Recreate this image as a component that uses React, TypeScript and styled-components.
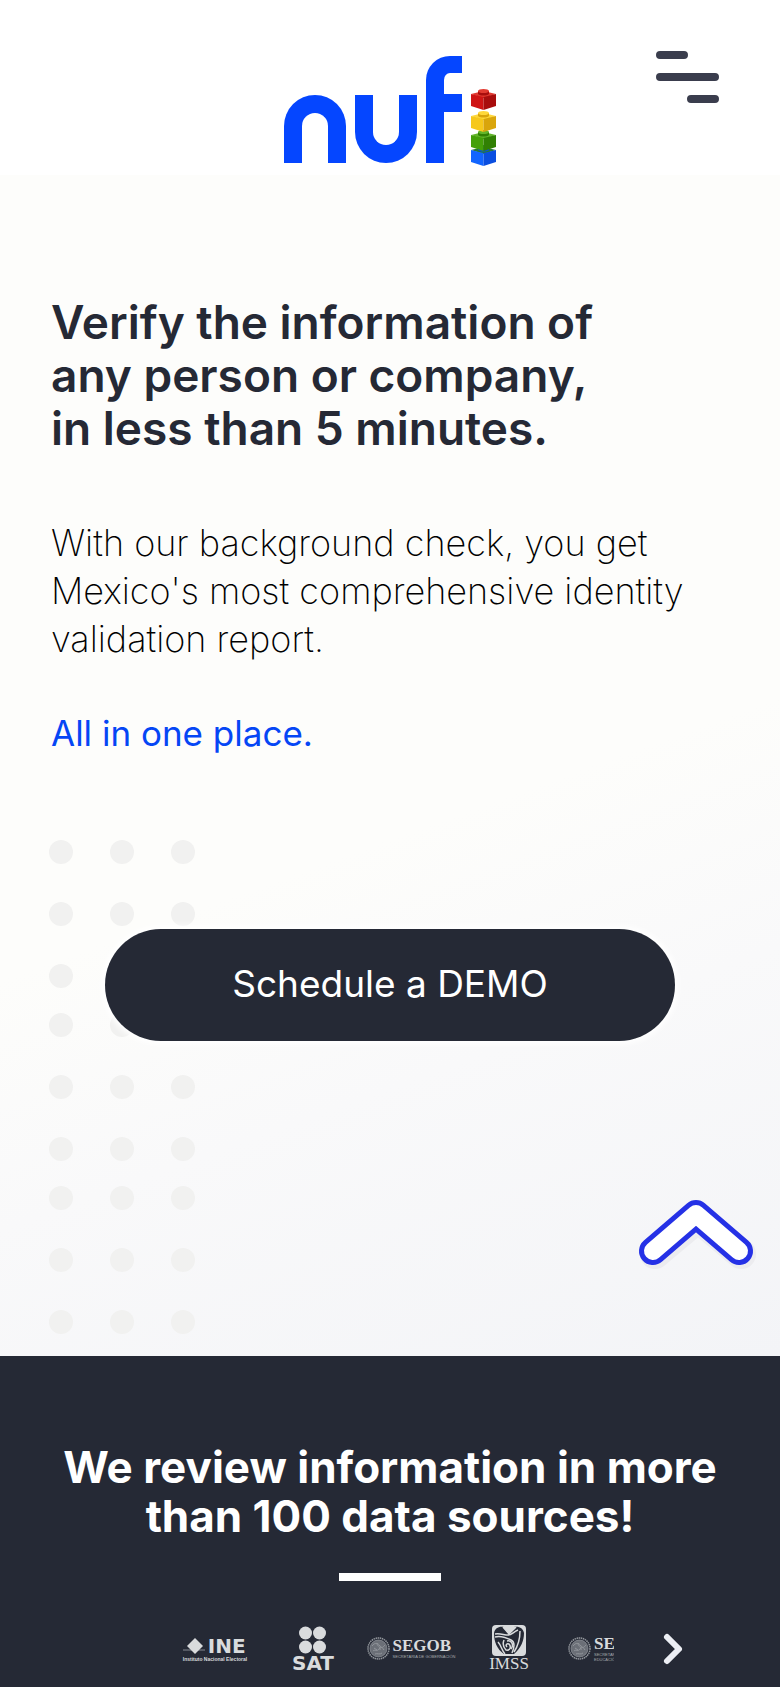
import React from "react"
import styled, { createGlobalStyle } from "styled-components"

const GlobalStyle = createGlobalStyle`
  * {
    box-sizing: border-box;
  }
  body {
    margin: 0;
    background-color: #252935;
    font-family: Inter, "Open Sans", sans-serif;
  }
  h1, h2, p {
    margin: 0;
  }
  button {
    padding: 0;
    border: none;
    background: none;
    cursor: pointer;
  }
`
const Header = styled.header`
  display: grid;
  grid-template-columns: 1fr auto 1fr;
  align-items: start;
  height: 175px;
  padding: 51px 61px 0;
  background-color: #ffffff;
`
const Logo = styled.a`
  grid-column: 2;
  display: flex;
  align-items: flex-end;
  gap: 9px;
  height: 115px;
`
const LetterN = styled.span`
  width: 62px;
  height: 68px;
  margin-bottom: 3px;
  border: 18px solid #0546ff;
  border-bottom: none;
  border-radius: 31px 31px 0 0;
`
const LetterU = styled(LetterN)`
  border-bottom: 18px solid #0546ff;
  border-top: none;
  border-radius: 0 0 31px 31px;
`
const LetterF = styled.span`
  width: 36px;
  height: 107px;
  margin-bottom: 3px;
  padding-top: 21px;
  border-left: 18px solid #0546ff;
  border-top: 17px solid #0546ff;
  border-top-left-radius: 24px;
  &::after {
    content: "";
    display: block;
    height: 18px;
    background-color: #0546ff;
  }
`
const MenuButton = styled.button`
  justify-self: end;
  height: 52px;
`
const Hero = styled.main`
  position: relative;
  padding: 121px 51px 315px;
  background: linear-gradient(160deg, #fdfdfb 0%, #fdfdfb 55%, #f9f9fa 72%, #f3f4f7 100%);
`
const Title = styled.h1`
  font-size: 46px;
  line-height: 53px;
  font-weight: 600;
  color: #252935;
`
const Lead = styled.p`
  margin-top: 64px;
  font-size: 36px;
  line-height: 48px;
  font-weight: 200;
  color: #000000;
`
const Highlight = styled.p`
  margin-top: 46px;
  font-size: 35px;
  line-height: 48px;
  font-weight: 400;
  color: #0546f5;
`
const DemoButton = styled.button`
  && {
    position: relative;
    display: block;
    width: 100%;
    max-width: 570px;
    height: 112px;
    margin: 172px auto 0;
    border-radius: 56px;
    background-color: #252935;
    box-shadow: 0 0 6px 3px #ffffff;
    color: #ffffff;
    font-family: inherit;
    font-size: 37px;
    font-weight: 400;
    padding-bottom: 4px;
  }
`
const Dots = styled.svg`
  position: absolute;
  left: 48px;
  bottom: 22px;
`
const TopButton = styled.button`
  position: absolute;
  right: 21px;
  bottom: 84px;
  height: 78px;
`
const Sources = styled.section`
  padding: 87px 51px 14px;
  background-color: #252935;
  color: #ffffff;
`
const SourcesTitle = styled.h2`
  font-size: 44px;
  line-height: 49px;
  font-weight: 700;
  text-align: center;
`
const Divider = styled.div`
  width: 102px;
  height: 8px;
  margin: 32px auto 44px;
  background-color: #ffffff;
`
const Carousel = styled.div`
  display: grid;
  grid-template-columns: 1fr minmax(0, 448px) 1fr;
  align-items: center;
`
const Strip = styled.div`
  grid-column: 2;
  display: flex;
  overflow: hidden;
  color: #d9dbdd;
`
const Slide = styled.div<{ $start?: boolean }>`
  flex: 0 0 98px;
  display: flex;
  align-items: center;
  justify-content: ${props => (props.$start ? "flex-start" : "center")};
  height: 47px;
  padding-left: ${props => (props.$start ? "10px" : "0")};
`
const Stack = styled.div<{ $center?: boolean }>`
  display: flex;
  flex-direction: column;
  align-items: ${props => (props.$center ? "center" : "flex-start")};
  white-space: nowrap;
`
const Line = styled.div`
  display: flex;
  align-items: center;
  gap: 3px;
`
const Ine = styled.span`
  font: 700 20px/20px "DejaVu Sans", sans-serif;
`
const Sat = styled.span`
  font: 700 20px/18px "DejaVu Sans", sans-serif;
`
const Imss = styled.span`
  font: 400 17px/16px "Liberation Serif", serif;
`
const Ministry = styled.span`
  font: 700 17px/16px "Liberation Serif", serif;
`
const Caption = styled.span`
  font: 700 5px/6px "Liberation Sans", sans-serif;
`
const MinistryCaption = styled.span`
  font: 400 4px/5px "Liberation Sans", sans-serif;
  color: #a6a9ae;
`
const NextButton = styled.button`
  justify-self: start;
  height: 34px;
  margin-left: 48px;
`

const bricks = [
  { y: 0, top: "#e23a30", left: "#cf1414", right: "#a80d0d" },
  { y: 22, top: "#ffd83a", left: "#f6c81c", right: "#d9a50c" },
  { y: 41, top: "#63b52a", left: "#45a009", right: "#318003" },
  { y: 56, top: "#287a35", left: "#1265ff", right: "#0a4ee0" },
]
const dotRows = [12, 74, 136, 185, 247, 309, 358, 420, 482]
const dotColumns = [13, 74, 135]

function Bricks() {
  return (
    <svg width="25" height="77" viewBox="0 0 25 77">
      {[...bricks].reverse().map(b => (
        <g key={b.y} transform={`translate(0 ${b.y})`}>
          <path d="M0 5L12.500 2L25 5L12.500 9Z" fill={b.top} />
          <path d="M0 5L12.500 8V21L0 17Z" fill={b.left} />
          <path d="M25 5L12.500 8V21L25 17Z" fill={b.right} />
          <path d="M7 2V5C9 7 16 7 18 5V2Z" fill={b.right} />
          <ellipse cx="12.500" cy="2" rx="5.500" ry="2" fill={b.top} />
        </g>
      ))}
    </svg>
  )
}

function Seal() {
  return (
    <svg width="23" height="23" viewBox="0 0 23 23" fill="none" stroke="#92969c">
      <circle cx="11.500" cy="11.500" r="10.500" strokeWidth="1.500" strokeDasharray="1.500 .6" />
      <circle cx="11.500" cy="11.500" r="8.500" fill="#6b6f77" strokeWidth=".7" />
      <path d="M5 9c3-4 6-3 8 0s3 1 5-1M6 14c2-2 4 1 6-2s3-2 5 1M8 17c2-1 5 1 7-1M10 6c0 4 4 3 3 7M7 11l3 2" />
    </svg>
  )
}

function SatDots() {
  return (
    <svg width="27" height="28" viewBox="0 0 27 28" fill="#d9dbdd">
      <circle cx="6.500" cy="7" r="6.500" />
      <circle cx="20.500" cy="7" r="6.500" />
      <circle cx="6.500" cy="21" r="6.500" />
      <circle cx="20.500" cy="21" r="6.500" />
    </svg>
  )
}

function ImssEagle() {
  return (
    <svg width="34" height="31" viewBox="0 0 34 31">
      <rect width="34" height="31" rx="4" fill="#d9dbdd" />
      <path d="M2 8C3 3 7 1 12 2L17 7L22 2C27 1 31 3 32 8C32 16 29 23 22 29H12C5 24 2 17 2 8Z" fill="#252935" />
      <g fill="none" stroke="#d9dbdd" strokeWidth="1.500">
        <path d="M11 2L17 9L24 2" fill="#d9dbdd" />
        <path d="M3 9C8 8 12 10 16 10S21 7 26 5M3 12C9 10 15 13 19 15S23 21 20 28" />
        <path d="M6 17C9 20 10 26 13 29M28 6C28 15 26 21 22 27" />
        <path d="M12 15C10 20 12 23 14 25C19 26 19 21 17 19C15 18 13 20 15 22M15 16C20 15 22 20 19 24" />
      </g>
    </svg>
  )
}

function App() {
  return (
    <>
      <GlobalStyle />
      <Header>
        <Logo href="#" aria-label="nufi">
          <LetterN />
          <LetterU />
          <LetterF />
          <Bricks />
        </Logo>
        <MenuButton type="button" aria-label="Menu">
          <svg width="63" height="52" viewBox="0 0 63 52" stroke="#3a3d4d" strokeWidth="8" strokeLinecap="round">
            <path d="M4 4H28M4 26H59M35 48H59" />
          </svg>
        </MenuButton>
      </Header>
      <Hero>
        <Dots width="148" height="494" viewBox="0 0 148 494" fill="#f1f1f0" aria-hidden="true">
          {dotRows.map(y => dotColumns.map(x => <circle key={`${x}-${y}`} cx={x} cy={y} r="12" />))}
        </Dots>
        <Title>
          Verify the information of<br />
          any person or company,<br />
          in less than 5 minutes.
        </Title>
        <Lead>
          With our background check, you get<br />
          Mexico's most comprehensive identity<br />
          validation report.
        </Lead>
        <Highlight>All in one place.</Highlight>
        <DemoButton type="button">Schedule a DEMO</DemoButton>
        <TopButton type="button" aria-label="Back to top">
          <svg width="126" height="78" viewBox="0 0 126 78" fill="none" strokeLinecap="round" strokeLinejoin="round">
            <path d="M22 60L65 24L108 60" stroke="#ececef" strokeWidth="30" />
            <path d="M20 57L63 20L106 57" stroke="#2531e6" strokeWidth="28" />
            <path d="M20 57L63 20L106 57" stroke="#ffffff" strokeWidth="18" />
          </svg>
        </TopButton>
      </Hero>
      <Sources>
        <SourcesTitle>
          We review information in more<br />
          than 100 data sources!
        </SourcesTitle>
        <Divider />
        <Carousel>
          <Strip>
            <Slide>
              <Stack>
                <Line>
                  <svg width="22" height="16" viewBox="0 0 22 16">
                    <path d="M0 12H22" stroke="#858991" />
                    <path d="M12 0L20 8L12 16L4 8Z" fill="#d9dbdd" />
                  </svg>
                  <Ine>INE</Ine>
                </Line>
                <Caption>Instituto Nacional Electoral</Caption>
              </Stack>
            </Slide>
            <Slide>
              <Stack $center>
                <SatDots />
                <Sat>SAT</Sat>
              </Stack>
            </Slide>
            <Slide>
              <Line>
                <Seal />
                <Stack>
                  <Ministry>SEGOB</Ministry>
                  <MinistryCaption>SECRETARÍA DE GOBERNACIÓN</MinistryCaption>
                </Stack>
              </Line>
            </Slide>
            <Slide>
              <Stack $center>
                <ImssEagle />
                <Imss>IMSS</Imss>
              </Stack>
            </Slide>
            <Slide $start>
              <Line>
                <Seal />
                <Stack>
                  <Ministry>SEP</Ministry>
                  <MinistryCaption>SECRETARÍA DE</MinistryCaption>
                  <MinistryCaption>EDUCACIÓN PÚBLICA</MinistryCaption>
                </Stack>
              </Line>
            </Slide>
          </Strip>
          <NextButton type="button" aria-label="Next">
            <svg width="22" height="34" viewBox="0 0 22 34" fill="none" stroke="#eceef4" strokeWidth="6" strokeLinecap="round" strokeLinejoin="round">
              <path d="M5 5L17 17L5 29" />
            </svg>
          </NextButton>
        </Carousel>
      </Sources>
    </>
  )
}

export default App
